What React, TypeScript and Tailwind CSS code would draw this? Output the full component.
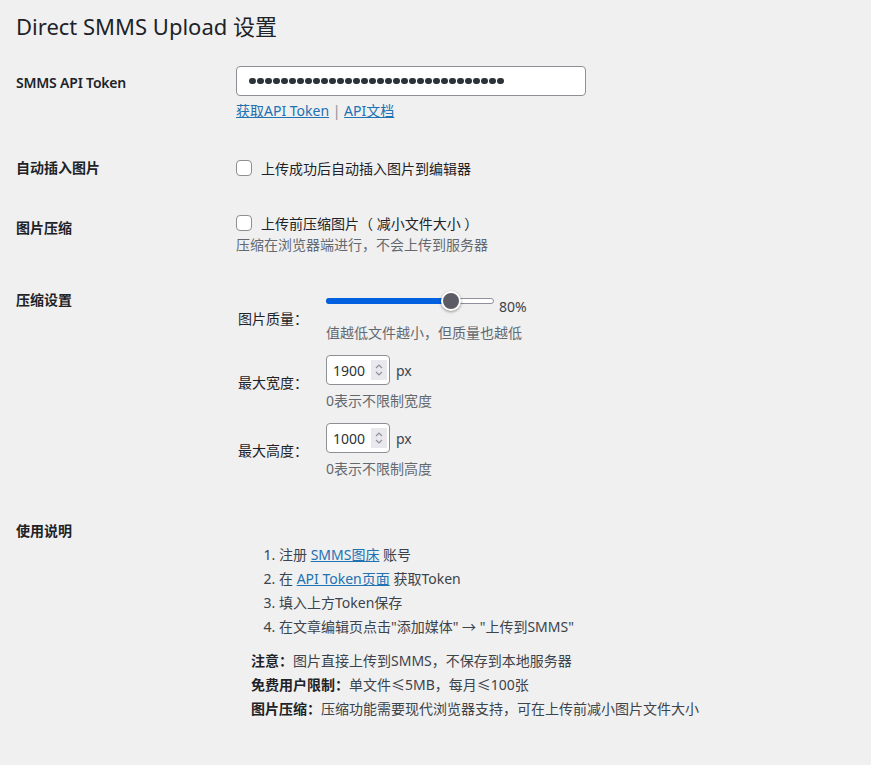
import React from "react";

const F = { fontFamily: '"Noto Sans", "Noto Sans CJK SC", sans-serif' };

function Checkbox() {
  return <span className="inline-block w-[16px] h-[16px] shrink-0 rounded-[4px] border border-[#8c8f94] bg-white" />;
}

function NumberBox({ value }: { value: string }) {
  return (
    <div className="flex items-center w-[64px] h-[30px] rounded-[4px] border border-[#8c8f94] bg-white pl-[6px] pr-[2px]">
      <span className="flex-1 text-[14px] text-[#2c3338]">{value}</span>
      <span className="flex flex-col items-center justify-center w-[16px] h-[20px] bg-[#e9e9ed]">
        <svg width="10" height="16" viewBox="0 0 10 16" fill="none" stroke="#8f8f9d" strokeWidth="1.2">
          <path d="M2 6 L5 3 L8 6" />
          <path d="M2 10 L5 13 L8 10" />
        </svg>
      </span>
    </div>
  );
}

export default function App() {
  const dots = Array.from({ length: 32 });
  return (
    <div className="min-h-screen bg-[#f0f0f1] pl-[16px] text-[14px] text-[#3c434a]" style={F}>
      <h1 className="pt-[11px] text-[22px] leading-[30px] font-normal text-[#1d2327]">Direct SMMS Upload 设置</h1>

      {/* Row 1 */}
      <div className="flex mt-[25px]">
        <div className="w-[220px] pt-[7px] leading-[20px] font-semibold text-[#1d2327] tracking-[-0.2px]">SMMS API Token</div>
        <div>
          <div className="flex items-center w-[350px] h-[30px] rounded-[4px] border border-[#8c8f94] bg-white pl-[12px] gap-[1.5px]">
            {dots.map((_, i) => (
              <span key={i} className="inline-block w-[6.5px] h-[6.5px] rounded-full bg-[#2c3338]" />
            ))}
          </div>
          <div className="mt-[5px] leading-[20px]">
            <a className="text-[#2271b1] underline">获取API Token</a>
            <span className="text-[#8c8f94]"> | </span>
            <a className="text-[#2271b1] underline">API文档</a>
          </div>
        </div>
      </div>

      {/* Row 2 */}
      <div className="flex mt-[37px]">
        <div className="w-[220px] leading-[20px] font-semibold text-[#1d2327]">自动插入图片</div>
        <div className="flex items-center h-[20px]">
          <Checkbox />
          <span className="ml-[9px] text-[#1d2327]">上传成功后自动插入图片到编辑器</span>
        </div>
      </div>

      {/* Row 3 */}
      <div className="flex mt-[35px]">
        <div className="w-[220px] pt-[5px] leading-[20px] font-semibold text-[#1d2327]">图片压缩</div>
        <div>
          <div className="flex items-center h-[20px]">
            <Checkbox />
            <span className="ml-[9px] text-[#1d2327]">上传前压缩图片（ 减小文件大小 ）</span>
          </div>
          <div className="mt-[2px] leading-[20px] text-[#646970]">压缩在浏览器端进行，不会上传到服务器</div>
        </div>
      </div>

      {/* Row 4 */}
      <div className="flex mt-[35px]">
        <div className="w-[220px] leading-[20px] font-semibold text-[#1d2327]">压缩设置</div>
        <div className="pl-[2px]">
          <div className="flex items-center">
            <div className="w-[88px] mt-[4px] leading-[20px] text-[#1d2327]">图片质量：</div>
            <div>
              <div className="flex items-start mt-[1px]">
                <div className="relative w-[168px] h-[20px]">
                  <div className="absolute left-0 right-0 top-[7px] h-[6px] rounded-full border border-[#8f8f9d] bg-white" />
                  <div className="absolute left-0 w-[125px] top-[7px] h-[6px] rounded-full bg-[#0060df]" />
                  <div className="absolute left-[115px] top-0 w-[20px] h-[20px] rounded-full bg-[#5b5b66] border-2 border-white shadow-[0_1px_3px_rgba(0,0,0,0.4)]" />
                </div>
                <span className="ml-[5px] mt-[6px] leading-[20px] text-[#3c434a]">80%</span>
              </div>
              <div className="mt-[6px] leading-[20px] text-[#646970]">值越低文件越小，但质量也越低</div>
            </div>
          </div>

          <div className="flex items-center mt-[12px]">
            <div className="w-[88px] leading-[20px] text-[#1d2327]">最大宽度：</div>
            <div>
              <div className="flex items-center">
                <NumberBox value="1900" />
                <span className="ml-[6px] text-[#3c434a]">px</span>
              </div>
              <div className="mt-[6px] leading-[20px] text-[#646970]">0表示不限制宽度</div>
            </div>
          </div>

          <div className="flex items-center mt-[12px]">
            <div className="w-[88px] leading-[20px] text-[#1d2327]">最大高度：</div>
            <div>
              <div className="flex items-center">
                <NumberBox value="1000" />
                <span className="ml-[6px] text-[#3c434a]">px</span>
              </div>
              <div className="mt-[6px] leading-[20px] text-[#646970]">0表示不限制高度</div>
            </div>
          </div>
        </div>
      </div>

      {/* Row 5 */}
      <div className="flex mt-[42px] pb-[40px]">
        <div className="w-[220px] leading-[20px] font-semibold text-[#1d2327]">使用说明</div>
        <div className="pl-[15px] pt-[22px]">
          <ol className="list-decimal list-outside pl-[28px] leading-[24px] text-[#3c434a]">
            <li>注册 <a className="text-[#2271b1] underline">SMMS图床</a> 账号</li>
            <li>在 <a className="text-[#2271b1] underline">API Token页面</a> 获取Token</li>
            <li>填入上方Token保存</li>
            <li>在文章编辑页点击"添加媒体" → "上传到SMMS"</li>
          </ol>
          <div className="mt-[10px] leading-[24px] text-[#3c434a]">
            <div><b className="font-semibold text-[#1d2327]">注意：</b>图片直接上传到SMMS，不保存到本地服务器</div>
            <div><b className="font-semibold text-[#1d2327]">免费用户限制：</b>单文件≤5MB，每月≤100张</div>
            <div><b className="font-semibold text-[#1d2327]">图片压缩：</b>压缩功能需要现代浏览器支持，可在上传前减小图片文件大小</div>
          </div>
        </div>
      </div>
    </div>
  );
}
